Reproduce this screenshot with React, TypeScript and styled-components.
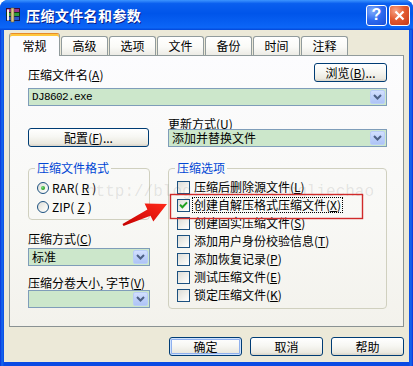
import { FC, ReactNode } from 'react';
import styled, { createGlobalStyle } from 'styled-components';

const GlobalStyle = createGlobalStyle`
  html, body {
    margin: 0;
    padding: 0;
    background: #ffffff;
  }
  body {
    font-family: "Noto Sans CJK SC", "Liberation Sans", sans-serif;
    font-size: 12px;
    color: #000;
  }
`;

const Window = styled.div`
  width: 413px;
  height: 366px;
  display: flex;
  flex-direction: column;
  background: linear-gradient(90deg, #0831d9 0px, #166aee 2px, #0a4ae4 4px, #0a4ae4 409px, #166aee 411px, #0831d9 413px);
  border-radius: 8px 8px 0 0;
  overflow: hidden;
`;

const TitleBar = styled.div`
  height: 30px;
  flex: none;
  display: flex;
  align-items: center;
  padding: 0 3px 0 5px;
  background: linear-gradient(
    180deg,
    #3d95ff 0%,
    #0a5fef 12%,
    #0055ea 45%,
    #0a63f5 85%,
    #0c66f7 92%,
    #0347d9 100%
  );
`;

const TitleText = styled.span`
  flex: 1;
  margin-left: 5px;
  color: #fff;
  font-size: 14px;
  font-weight: 700;
  line-height: 16px;
  letter-spacing: 0.4px;
  text-shadow: 1px 1px 0 #0a1e8a;
`;

const CaptionButton = styled.div<{ $close?: boolean }>`
  width: 21px;
  height: 21px;
  box-sizing: border-box;
  margin-left: 2px;
  border: 1px solid #fff;
  border-radius: 3px;
  display: flex;
  align-items: center;
  justify-content: center;
  color: #fff;
  font-family: "Liberation Sans", sans-serif;
  font-size: 16px;
  font-weight: 700;
  background: ${(p) =>
    p.$close
      ? 'radial-gradient(circle at 30% 25%, #f7a487 0%, #e35b30 45%, #c5391a 100%)'
      : 'radial-gradient(circle at 30% 25%, #83aefc 0%, #2d69ef 50%, #1a4fd6 100%)'};
`;

const Body = styled.div`
  flex: 1;
  margin: 0 4px 4px;
  padding: 3px 5px 0;
  background: #ece9d8;
  display: flex;
  flex-direction: column;
`;

const TabStrip = styled.div`
  display: flex;
  align-items: flex-end;
  height: 22px;
  position: relative;
  z-index: 1;
`;

const Tab = styled.div<{ $active?: boolean }>`
  box-sizing: border-box;
  display: flex;
  align-items: center;
  justify-content: center;
  width: ${(p) => (p.$active ? 51 : 47)}px;
  height: ${(p) => (p.$active ? 23 : 19)}px;
  margin-bottom: ${(p) => (p.$active ? -1 : 0)}px;
  margin-left: ${(p) => (p.$active ? 0 : 1)}px;
  padding-top: ${(p) => (p.$active ? 1 : 0)}px;
  border: 1px solid #919b9c;
  border-bottom: none;
  border-top-color: ${(p) => (p.$active ? '#e68b2c' : '#919b9c')};
  border-radius: 3px 3px 0 0;
  line-height: 14px;
  background: ${(p) =>
    p.$active
      ? '#fcfcfe'
      : 'linear-gradient(180deg, #ffffff 0%, #fafaf7 55%, #ecebe5 100%)'};
  box-shadow: ${(p) => (p.$active ? 'inset 0 2px 0 #ffc73c' : 'none')};
  &:first-child {
    margin-left: 0;
  }
`;

const Panel = styled.div`
  position: relative;
  box-sizing: border-box;
  height: 272px;
  flex: none;
  padding: 7px 16px 0 18px;
  border: 1px solid #919b9c;
  border-right-color: #8a9293;
  border-bottom-color: #8a9293;
  background: linear-gradient(180deg, #fcfcfe 0%, #f8f8f5 60%, #f3f2ec 100%);
  display: flex;
  flex-direction: column;
`;

const Label = styled.div`
  line-height: 14px;
  white-space: nowrap;
`;

const FileRow = styled.div`
  display: flex;
  justify-content: space-between;
  align-items: flex-end;
  height: 19px;
`;

const Button = styled.div<{ $default?: boolean; $w: number }>`
  box-sizing: border-box;
  width: ${(p) => p.$w}px;
  height: 19px;
  border: 1px solid #003c74;
  border-radius: 3px;
  display: flex;
  align-items: center;
  justify-content: center;
  line-height: 14px;
  background: linear-gradient(180deg, #ffffff 0%, #f7f7f3 45%, #ebe9e0 85%, #d8d3c8 100%);
  box-shadow: ${(p) =>
    p.$default ? 'inset 0 0 0 1px #cee1fd, inset 0 0 0 2px #8fb0ee' : 'none'};
`;

const Combo = styled.div<{ $mt?: number }>`
  box-sizing: border-box;
  height: 18px;
  margin-top: ${(p) => p.$mt ?? 0}px;
  border: 1px solid #7f9db9;
  background: #cce7cb;
  display: flex;
  align-items: center;
`;

const ComboText = styled.div<{ $mono?: boolean }>`
  flex: 1;
  padding-left: 3px;
  line-height: 14px;
  font-family: ${(p) =>
    p.$mono
      ? '"Liberation Mono", "Noto Sans CJK SC", monospace'
      : '"Noto Sans CJK SC", "Liberation Sans", sans-serif'};
  font-size: ${(p) => (p.$mono ? 11 : 12)}px;
  letter-spacing: ${(p) => (p.$mono ? -0.6 : 0)}px;
`;

const DropButton = styled.div`
  box-sizing: border-box;
  width: 15px;
  height: 14px;
  margin-right: 1px;
  border: 1px solid #b9cdf7;
  border-radius: 2px;
  background: linear-gradient(180deg, #d3e0fe 0%, #bdd0fa 50%, #aec4f6 100%);
  display: flex;
  align-items: center;
  justify-content: center;
`;

const TwoCol = styled.div<{ $mt: number }>`
  display: grid;
  grid-template-columns: 122px 1fr;
  column-gap: 18px;
  margin-top: ${(p) => p.$mt}px;
`;

const Column = styled.div<{ $end?: boolean }>`
  display: flex;
  flex-direction: column;
  justify-content: ${(p) => (p.$end ? 'flex-end' : 'flex-start')};
`;

const Group = styled.fieldset<{ $h: number }>`
  box-sizing: border-box;
  height: ${(p) => p.$h}px;
  margin: 0;
  padding: 0 0 0 8px;
  min-width: 0;
  border: 1px solid #d0d0bf;
  border-radius: 4px;
`;

const Legend = styled.legend`
  color: #0046d5;
  line-height: 12px;
  padding: 0 2px;
  margin-left: -2px;
`;

const Rows = styled.div<{ $pitch: number }>`
  padding-top: 4px;
  display: grid;
  grid-auto-rows: ${(p) => p.$pitch}px;
  align-items: center;
`;

const OptionRow = styled.div`
  display: flex;
  align-items: center;
  gap: 3px;
  line-height: 14px;
  white-space: nowrap;
`;

const Radio = styled.span<{ $on?: boolean }>`
  box-sizing: border-box;
  width: 12px;
  height: 12px;
  border: 1px solid #1c5180;
  border-radius: 50%;
  background: linear-gradient(135deg, #dcdcd7 0%, #f4f4f0 60%, #ffffff 100%);
  display: flex;
  align-items: center;
  justify-content: center;
  &::after {
    content: '';
    display: ${(p) => (p.$on ? 'block' : 'none')};
    width: 4px;
    height: 4px;
    border-radius: 50%;
    background: radial-gradient(circle at 35% 35%, #7fe07f 0%, #2fa52f 60%, #1d8a1d 100%);
  }
`;

const Check = styled.span`
  box-sizing: border-box;
  width: 13px;
  height: 13px;
  flex: none;
  border: 1px solid #1c5180;
  background: linear-gradient(135deg, #dcdcd7 0%, #f2f2ee 60%, #ffffff 100%);
  display: flex;
  align-items: center;
  justify-content: center;
`;

const OptionText = styled.span<{ $focus?: boolean }>`
  padding: 0 1px;
  outline: ${(p) => (p.$focus ? '1px dotted #000' : 'none')};
`;

const Footer = styled.div`
  margin-top: 10px;
  display: flex;
  justify-content: flex-end;
  gap: 8px;
`;

const Annotation = styled.svg`
  position: absolute;
  left: 0;
  top: 0;
  width: 100%;
  height: 100%;
  pointer-events: none;
  z-index: 3;
`;

const Watermark = styled.div`
  position: absolute;
  left: 76px;
  top: 127px;
  font-family: "Liberation Mono", monospace;
  font-size: 16px;
  line-height: 18px;
  color: rgba(90, 90, 90, 0.14);
  white-space: nowrap;
  pointer-events: none;
  z-index: 2;
`;

const Chevron = () => (
  <svg width="9" height="6" viewBox="0 0 9 6">
    <path d="M1 1 L4.5 4.5 L8 1" fill="none" stroke="#4d6185" strokeWidth="2" />
  </svg>
);

const Key: FC<{ k: string }> = ({ k }) => (
  <>
    (<u>{k}</u>)
  </>
);

const ComboBox: FC<{ children?: ReactNode; mono?: boolean; mt?: number }> = ({
  children,
  mono,
  mt,
}) => (
  <Combo $mt={mt}>
    <ComboText $mono={mono}>{children}</ComboText>
    <DropButton>
      <Chevron />
    </DropButton>
  </Combo>
);

const RarIcon = () => (
  <svg width="16" height="16" viewBox="0 0 16 16">
    <rect x="1.5" y="1.5" width="13" height="4" fill="#9a2f8e" stroke="#3a1036" />
    <rect x="1.5" y="5.5" width="13" height="4" fill="#2f9c3c" stroke="#0f3a14" />
    <rect x="1.5" y="9.5" width="13" height="4" fill="#2c54c8" stroke="#0e1f5a" />
    <rect x="2" y="2.5" width="2" height="11" fill="#f4f1e6" />
    <rect x="6" y="1" width="3" height="14" fill="#d9c58a" stroke="#6b5a2a" strokeWidth="0.6" />
  </svg>
);

const CheckMark = () => (
  <svg width="9" height="8" viewBox="0 0 9 8">
    <path d="M1 3.8 L3.4 6.2 L8 1.4" fill="none" stroke="#21a121" strokeWidth="2" />
  </svg>
);

const options: { text: string; k: string; on?: boolean }[] = [
  { text: '压缩后删除源文件', k: 'L' },
  { text: '创建自解压格式压缩文件', k: 'X', on: true },
  { text: '创建固实压缩文件', k: 'S' },
  { text: '添加用户身份校验信息', k: 'T' },
  { text: '添加恢复记录', k: 'P' },
  { text: '测试压缩文件', k: 'E' },
  { text: '锁定压缩文件', k: 'K' },
];

const tabs = ['常规', '高级', '选项', '文件', '备份', '时间', '注释'];

export default function App() {
  return (
    <>
      <GlobalStyle />
      <Window>
        <TitleBar>
          <RarIcon />
          <TitleText>压缩文件名和参数</TitleText>
          <CaptionButton>?</CaptionButton>
          <CaptionButton $close>
            <svg width="11" height="11" viewBox="0 0 11 11">
              <path d="M1.5 1.5 L9.5 9.5 M9.5 1.5 L1.5 9.5" stroke="#fff" strokeWidth="2.2" />
            </svg>
          </CaptionButton>
        </TitleBar>
        <Body>
          <TabStrip>
            {tabs.map((t, i) => (
              <Tab key={t} $active={i === 0}>
                {t}
              </Tab>
            ))}
          </TabStrip>
          <Panel>
            <FileRow>
              <Label>
                压缩文件名<Key k="A" />
              </Label>
              <Button $w={73}>
                浏览<Key k="B" />...
              </Button>
            </FileRow>
            <ComboBox mono mt={6}>
              DJ8602.exe
            </ComboBox>

            <TwoCol $mt={12}>
              <Column $end>
                <Button $w={121}>
                  配置<Key k="F" />...
                </Button>
              </Column>
              <Column>
                <Label style={{ lineHeight: '11px' }}>
                  更新方式<Key k="U" />
                </Label>
                <ComboBox>添加并替换文件</ComboBox>
              </Column>
            </TwoCol>

            <TwoCol $mt={15}>
              <Column>
                <Group $h={58}>
                  <Legend>压缩文件格式</Legend>
                  <Rows $pitch={19}>
                    <OptionRow>
                      <Radio $on />
                      RAR<Key k="R" />
                    </OptionRow>
                    <OptionRow>
                      <Radio />
                      ZIP<Key k="Z" />
                    </OptionRow>
                  </Rows>
                </Group>
                <Label style={{ marginTop: 12 }}>
                  压缩方式<Key k="C" />
                </Label>
                <ComboBox mt={2}>标准</ComboBox>
                <Label style={{ marginTop: 10 }}>
                  压缩分卷大小, 字节<Key k="V" />
                </Label>
                <ComboBox />
              </Column>
              <Group $h={147}>
                <Legend>压缩选项</Legend>
                <Rows $pitch={18}>
                  {options.map((o) => (
                    <OptionRow key={o.k}>
                      <Check>{o.on && <CheckMark />}</Check>
                      <OptionText $focus={o.on}>
                        {o.text}
                        <Key k={o.k} />
                      </OptionText>
                    </OptionRow>
                  ))}
                </Rows>
              </Group>
            </TwoCol>

            {/* screenshot annotations */}
            <Watermark>http://blog.csdn.net/bgliechao</Watermark>
            <Annotation viewBox="0 0 393 270" preserveAspectRatio="none">
              <defs>
                <linearGradient id="arrowFill" x1="0" y1="1" x2="1" y2="0">
                  <stop offset="0" stopColor="#c40000" />
                  <stop offset="1" stopColor="#ff2a1a" />
                </linearGradient>
              </defs>
              <rect x="160.5" y="138.5" width="192" height="24" fill="none" stroke="#d02a2a" strokeWidth="1.4" />
              <polygon
                points="112.5,167.9 137.4,153.5 134.6,147.6 157,148 143.3,165.6 140.5,159.8 113.5,170.1"
                fill="url(#arrowFill)"
              />
            </Annotation>
          </Panel>
          <Footer>
            <Button $w={73} $default>
              确定
            </Button>
            <Button $w={73}>取消</Button>
            <Button $w={73}>帮助</Button>
          </Footer>
        </Body>
      </Window>
    </>
  );
}
